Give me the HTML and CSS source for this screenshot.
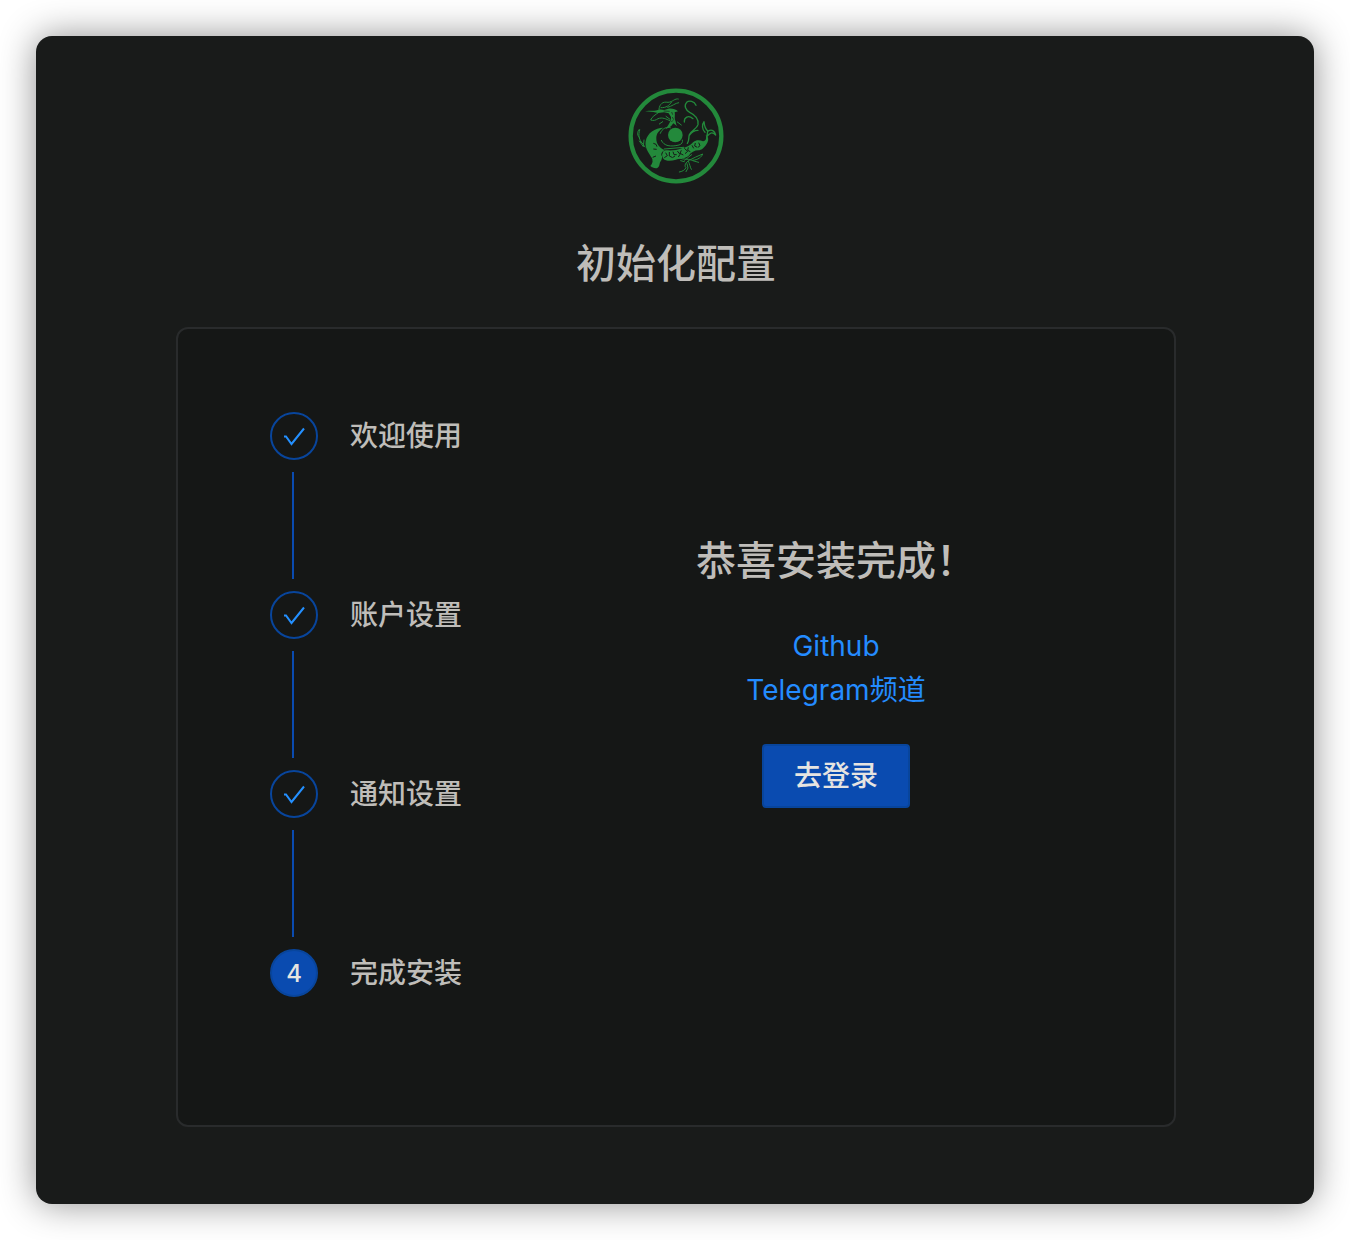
FILE: index.html
```html
<!DOCTYPE html>
<html lang="zh-CN">
<head>
<meta charset="utf-8">
<meta name="viewport" content="width=device-width, initial-scale=1">
<title>初始化配置</title>
<link rel="stylesheet" href="styles.css">
</head>
<body>
<main class="window">
  <svg class="logo" viewBox="0 0 336 336" aria-hidden="true">
    <circle cx="168" cy="168" r="136" fill="none" stroke="#23893b" stroke-width="13"/>
    <circle cx="166" cy="165" r="22" fill="#23893b"/>
    <!-- body, from the left shoulder round to the coils -->
    <path fill="#23893b" d="M130 143C105 144 82 158 77 184C74 202 84 216 93 230C101 241 98 249 91 258C96 262 104 266 112 264C121 260 116 250 124 241L127 230C119 222 128 211 138 211C152 212 170 212 185 205C198 202 210 197 220 186C229 178 240 180 249 184C260 181 261 174 257 165C265 168 267 180 262 188C256 198 250 207 238 211C225 210 214 216 206 227C195 237 177 235 168 239C151 244 137 243 130 236L126 225L132 209C119 204 109 191 109 177C108 159 118 151 130 143Z"/>
    <g fill="none" stroke="#181a19" stroke-width="3">
      <path d="M100 190l8 3l3 7M100 207l10 1M98 232l10-4M137 218l5 9l-9 6M148 216v12l8 4M159 215l3 9h8M157 233l8-5M172 213l8 10l-5 8M184 211l-4 9l10 5M193 205l10 9l-8 7M205 202l-2 9l8 4M216 196l5 9M226 189l-2 9l8 4M236 188l4 9l-6 5"/>
    </g>
    <!-- head, mane and neck -->
    <path fill="#23893b" d="M75 94C91 91 105 95 118 88L133 90L145 86C158 85 166 87 174 94L164 97C166 104 163 111 165 119C169 126 166 132 172 139L160 130L153 139L137 148C144 134 154 126 153 111L146 100L132 97L114 99L100 96Z"/>
    <g fill="none" stroke="#181a19" stroke-width="2"><path d="M131 93l18 1M155 96l3 8M157 111l4 8M154 126l5-5"/></g>
    <g fill="none" stroke="#23893b" stroke-width="3" stroke-linecap="round" stroke-linejoin="round">
      <path d="M117 87C119 72 128 64 144 67C159 66 164 54 175 57M123 83C139 84 148 76 154 67M143 82C156 79 166 69 176 68M118 96C105 105 96 110 92 120C99 123 108 121 114 116C127 111 139 117 149 122M138 109L150 118M128 125L118 132M172 126L184 135"/>
      <path d="M228 76C223 63 208 60 200 67C191 77 197 90 209 97C226 105 237 116 234 134C231 147 214 150 208 164C205 173 209 179 202 190M193 126C192 112 205 104 219 116M234 151C222 151 214 157 208 166" stroke-width="4"/>
      <path d="M255 157C246 148 245 134 252 125C253 138 259 150 264 154C275 146 284 153 287 165C276 154 269 159 261 169M263 154L258 188" stroke-width="4"/>
      <path d="M58 148C50 155 52 169 59 174M59 150C54 165 57 180 68 191L75 201M58 183L70 200L72 180M61 184L69 192"/>
      <path d="M121 160C126 145 141 139 151 143M124 181C132 199 152 201 177 195C185 193 189 187 187 180M133 207L191 202M100 242C106 250 102 255 96 259"/>
      <path d="M178 234C191 240 202 235 217 241C234 240 245 231 248 222C234 227 220 235 207 241C198 247 191 257 198 263C195 270 186 275 178 276M205 244C210 253 210 262 214 268M201 251L204 264L198 275M194 241L205 232L215 224M218 242L236 247M182 242L193 245"/>
    </g>
  </svg>
  <h1 class="title">初始化配置</h1>

  <section class="card">
    <ol class="steps">
      <li class="step">
        <span class="badge"><svg class="check" viewBox="0 0 24 24" aria-hidden="true"><path d="M2 12.500L4 12.500L9.500 20L22 4.500"/></svg></span>
        <span class="label">欢迎使用</span>
      </li>
      <li class="step">
        <span class="badge"><svg class="check" viewBox="0 0 24 24" aria-hidden="true"><path d="M2 12.500L4 12.500L9.500 20L22 4.500"/></svg></span>
        <span class="label">账户设置</span>
      </li>
      <li class="step">
        <span class="badge"><svg class="check" viewBox="0 0 24 24" aria-hidden="true"><path d="M2 12.500L4 12.500L9.500 20L22 4.500"/></svg></span>
        <span class="label">通知设置</span>
      </li>
      <li class="step" aria-current="step">
        <span class="badge badge-current">4</span>
        <span class="label">完成安装</span>
      </li>
    </ol>
    <div class="result">
      <h2 class="title">恭喜安装完成！</h2>
      <nav class="links">
        <a href="#github">Github</a>
        <a href="#telegram">Telegram频道</a>
      </nav>
      <button class="login" type="button">去登录</button>
    </div>
  </section>
</main>
</body>
</html>
```
FILE: styles.css
```css
* {
  box-sizing: border-box;
}

body {
  margin: 0;
  padding: 36px;
  background: #fff;
  color: #bfbdb9;
  font-family: Inter, "Noto Sans CJK SC", sans-serif;
  font-size: 28px;
  line-height: 44px;
}

.window {
  display: flex;
  flex-direction: column;
  align-items: center;
  padding: 44px 138px 77px 140px;
  border-radius: 16px;
  background: #191b1a;
  box-shadow: 0 0 36px rgba(0, 0, 0, 0.44);
}

.logo {
  width: 112px;
  height: 112px;
}

.title {
  margin: 0;
  font-size: 40px;
  font-weight: 500;
  line-height: 52px;
}

.window > .title {
  margin: 46px 0 37px;
}

.card {
  display: flex;
  width: 100%;
  padding: 83px 92px 128px;
  border: 2px solid #292b2c;
  border-radius: 12px;
  background: #151716;
}

.steps {
  flex: 0 0 320px;
  margin: 0;
  padding: 0;
  list-style: none;
}

.step {
  display: grid;
  grid-template-columns: 48px 1fr;
  column-gap: 32px;
  align-items: center;
}

/* connector between two steps */
.step:not(:last-child)::after {
  content: "";
  width: 2px;
  height: 107px;
  margin: 12px 22px;
  background: #0a4bb0;
}

.label {
  font-weight: 500;
}

.badge {
  display: flex;
  align-items: center;
  justify-content: center;
  width: 48px;
  height: 48px;
  border: 2px solid #08459c;
  border-radius: 50%;
  font-size: 24px;
}

.badge-current {
  padding-top: 2px;
  background: #0a4bb0;
  color: #e6e4e1;
  font-weight: 500;
}

.check {
  width: 24px;
  height: 24px;
  fill: none;
  stroke: #2490ff;
  stroke-width: 2;
}

.result {
  display: flex;
  flex: 1;
  flex-direction: column;
  align-items: center;
  padding-top: 123px;
}

.links {
  display: flex;
  flex-direction: column;
  align-items: center;
  margin: 37px 0 32px;
}

.links a {
  color: #248cff;
  text-decoration: none;
}

.login {
  height: 64px;
  padding: 0 30px;
  border: 2px solid #08459c;
  border-radius: 4px;
  background: #0a4bb0;
  color: #e6e4e1;
  font: inherit;
  font-weight: 500;
  cursor: pointer;
}
```
